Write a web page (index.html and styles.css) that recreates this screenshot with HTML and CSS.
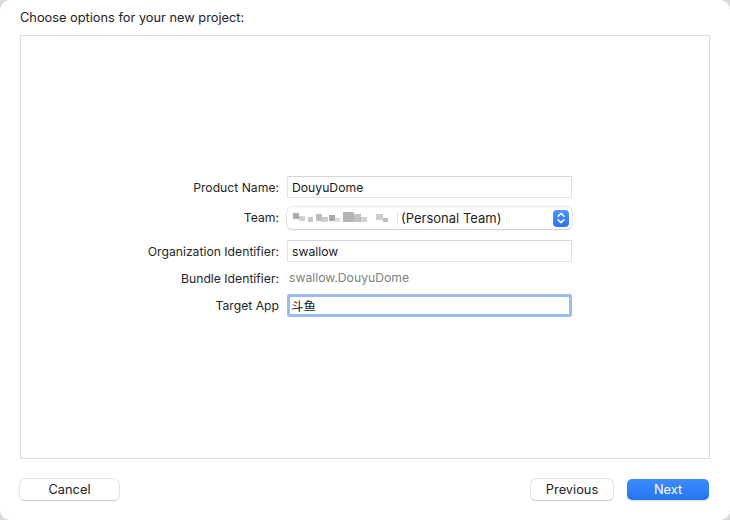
FILE: index.html
```html
<!DOCTYPE html>
<html>
<head>
<meta charset="utf-8">
<link rel="stylesheet" href="styles.css">
</head>
<body>
<div class="window">
  <div class="title">Choose options for your new project:</div>
  <div class="panel">
    <div class="form">
      <div class="label">Product Name:</div>
      <div class="field">DouyuDome</div>
      <div class="label">Team:</div>
      <div class="popup">
        <span class="blur">
          <i style="left:6px;top:2px;width:6px;height:6px;background:#aaaaaa"></i>
          <i style="left:12px;top:5px;width:6px;height:5px;background:#d0d0d0"></i>
          <i style="left:21px;top:6px;width:5px;height:5px;background:#c6c6c6"></i>
          <i style="left:29px;top:3px;width:6px;height:7px;background:#bdbdbd"></i>
          <i style="left:35px;top:6px;width:6px;height:5px;background:#cccccc"></i>
          <i style="left:42px;top:4px;width:6px;height:6px;background:#a9a9a9"></i>
          <i style="left:48px;top:7px;width:5px;height:4px;background:#dedede"></i>
          <i style="left:56px;top:1px;width:11px;height:10px;background:#b5b5b5"></i>
          <i style="left:67px;top:3px;width:7px;height:8px;background:#c2c2c2"></i>
          <i style="left:74px;top:6px;width:6px;height:5px;background:#d2d2d2"></i>
          <i style="left:89px;top:3px;width:7px;height:6px;background:#cdcdcd"></i>
          <i style="left:96px;top:7px;width:5px;height:4px;background:#c0c0c0"></i>
          <i style="left:110px;top:0px;width:1px;height:14px;background:#e4e4e4"></i>
        </span>
        <span class="team">(Personal Team)</span>
        <span class="stepper">
          <svg width="16" height="16" viewBox="0 0 16 16"><path d="M5 6.2 L8 3.4 L11 6.2 M5 9.8 L8 12.6 L11 9.8" fill="none" stroke="#fff" stroke-width="1.5" stroke-linecap="round" stroke-linejoin="round"/></svg>
        </span>
      </div>
      <div class="label gap">Organization Identifier:</div>
      <div class="field gap">swallow</div>
      <div class="label">Bundle Identifier:</div>
      <div class="static">swallow.DouyuDome</div>
      <div class="label">Target App</div>
      <div class="field focus">斗鱼</div>
    </div>
  </div>
  <div class="buttons">
    <button class="btn cancel">Cancel</button>
    <div class="right">
      <button class="btn prev">Previous</button>
      <button class="btn next">Next</button>
    </div>
  </div>
</div>
</body>
</html>
```

FILE: styles.css
```css
html, body {
  margin: 0;
  padding: 0;
  background: #d9d9d9;
}
body {
  width: 730px;
  height: 520px;
  font-family: "Inter", "Liberation Sans", "Noto Sans CJK SC", sans-serif;
  font-size: 12.2px;
  color: #1e1e1e;
}
.window {
  width: 730px;
  height: 520px;
  box-sizing: border-box;
  background: #ffffff;
  border-radius: 10px;
  padding: 10px 20px 0 20px;
  display: flex;
  flex-direction: column;
}
.title {
  height: 16px;
  line-height: 16px;
  font-size: 12.8px;
  color: #222;
  margin-bottom: 9px;
}
.panel {
  height: 424px;
  box-sizing: border-box;
  border: 1px solid #dcdcdc;
  display: flex;
  flex-direction: column;
  padding-top: 140px;
}
.form {
  display: grid;
  grid-template-columns: 258px 285px;
  column-gap: 8px;
  row-gap: 8px;
  align-items: center;
}
.gap {
  margin-top: 3px;
}
.label {
  text-align: right;
  color: #262626;
}
.field {
  height: 22px;
  line-height: 21px;
  box-sizing: border-box;
  border: 1px solid #e1e1e1;
  border-top-color: #d6d6d6;
  padding-left: 4px;
  color: #1a1a1a;
  background: #fff;
}
.field.focus {
  height: 23px;
  border: 3px solid #9bbcef;
  border-radius: 2px;
  padding-left: 1px;
  line-height: 17px;
  font-family: "Noto Sans CJK SC", sans-serif;
  font-size: 12.5px;
  margin-top: 0;
}
.popup {
  height: 22px;
  box-sizing: border-box;
  border-radius: 5px;
  background: #fff;
  box-shadow: 0 0 0 0.5px #d4d4d4, 0 1px 1.5px rgba(0,0,0,0.22);
  display: flex;
  align-items: center;
  position: relative;
  margin-top: 1px;
}
.blur {
  width: 114px;
  height: 14px;
  position: relative;
  flex: none;
}
.blur i {
  position: absolute;
  display: block;
}
.team {
  flex: 1;
  font-size: 13px;
  color: #1e1e1e;
}
.stepper {
  width: 16px;
  height: 17px;
  margin-right: 3px;
  border-radius: 4px;
  background: linear-gradient(#4b95fb, #2b74f0);
  display: flex;
  align-items: center;
  justify-content: center;
}
.static {
  color: #7f7f7f;
  height: 14px;
  line-height: 14px;
  padding-left: 2px;
  margin: 1px 0 1px;
}
.buttons {
  display: flex;
  justify-content: space-between;
  align-items: center;
  margin-top: 20px;
  padding-right: 1px;
}
.right {
  display: flex;
  gap: 14px;
}
.btn {
  font-family: "Inter", "Liberation Sans", sans-serif;
  font-size: 12.8px;
  height: 21px;
  padding: 0;
  border: none;
  border-radius: 5px;
  background: #fff;
  color: #222;
  box-shadow: 0 0 0 0.5px #cfcfcf, 0 1px 1.5px rgba(0,0,0,0.2);
}
.cancel { width: 99px; }
.prev { width: 82px; }
.next {
  width: 82px;
  color: #fff;
  background: linear-gradient(#3b8cfa, #2475f2);
  box-shadow: 0 1px 1px rgba(0,0,0,0.15);
}
```
